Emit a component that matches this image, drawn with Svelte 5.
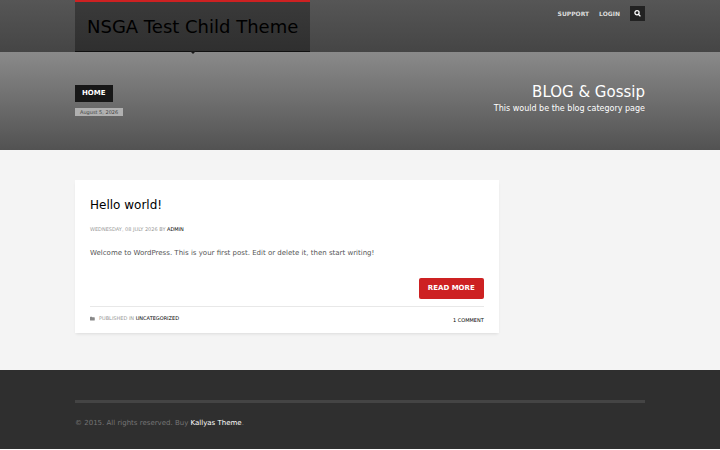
<script>
  const siteTitle = "NSGA Test Child Theme";

  const topLinks = [
    { label: "Support", href: "#support" },
    { label: "Login", href: "#login" },
  ];

  const posts = [
    {
      title: "Hello world!",
      date: "Wednesday, 08 July 2026",
      author: "admin",
      excerpt:
        "Welcome to WordPress. This is your first post. Edit or delete it, then start writing!",
      category: "Uncategorized",
      comments: 1,
    },
  ];
</script>

<svelte:head>
  <title>{siteTitle}</title>
</svelte:head>

<header class="site-header">
  <div class="container header-row">
    <a class="logo" href="#home">{siteTitle}</a>
    <nav class="top-nav">
      {#each topLinks as link}
        <a href={link.href}>{link.label}</a>
      {/each}
      <button class="search" aria-label="Search">
        <svg viewBox="0 0 14 14" aria-hidden="true">
          <circle cx="6" cy="5.5" r="4.2" />
          <path d="M8.8 8.4 L12.8 12.8" />
        </svg>
      </button>
    </nav>
  </div>
</header>

<section class="sub-header">
  <div class="container sub-row">
    <div class="crumbs">
      <a class="home" href="#home">Home</a>
      <span class="today">August 5, 2026</span>
    </div>
    <div class="page-title">
      <h1>BLOG &amp; Gossip</h1>
      <p>This would be the blog category page</p>
    </div>
  </div>
</section>

<main>
  <div class="container content">
    <div class="posts">
      {#each posts as post}
        <article class="post">
          <h2><a href="#post">{post.title}</a></h2>
          <p class="meta">{post.date} by <a href="#author">{post.author}</a></p>
          <p class="excerpt">{post.excerpt}</p>
          <a class="read-more" href="#post">Read more</a>
          <div class="post-footer">
            <span class="category">
              <svg viewBox="0 0 10 9" aria-hidden="true">
                <path d="M0 2 Q0 1 1 1 H3.5 Q4.5 1 4.5 2 H8.5 Q9.5 2 9.5 3 V7.5 Q9.5 8.5 8.5 8.5 H1 Q0 8.5 0 7.5 Z" />
              </svg>
              <span>Published in <a href="#category">{post.category}</a></span>
            </span>
            <a class="comments" href="#comments">
              {post.comments} Comment{post.comments === 1 ? "" : "s"}
            </a>
          </div>
        </article>
      {/each}
    </div>
  </div>
</main>

<footer class="site-footer">
  <div class="container">
    <p class="copyright">
      © 2015. All rights reserved. Buy <a href="#kallyas">Kallyas Theme</a>.
    </p>
  </div>
</footer>

<style>
  :global(body) {
    background: #fff;
    color: #555;
    font-family: "DejaVu Sans", Verdana, sans-serif;
    font-size: 7px;
    line-height: 10px;
  }

  a {
    color: inherit;
    text-decoration: none;
  }

  h1,
  h2,
  p {
    margin: 0;
    font-weight: 400;
  }

  main {
    background: #f4f4f4;
  }

  .container {
    box-sizing: border-box;
    width: calc(100% - 30px);
    max-width: 570px;
    margin: 0 auto;
  }

  .site-header {
    background: linear-gradient(#565656, #454545);
  }

  .header-row {
    display: flex;
    justify-content: space-between;
    align-items: flex-start;
  }

  .logo {
    position: relative;
    padding: 0 12px;
    border-top: 2px solid #cd2122;
    border-bottom: 1px solid #111;
    background: linear-gradient(#3a3a3a, #2f2f2f);
    color: #000;
    font-size: 18px;
    line-height: 49px;
  }

  .logo::after {
    content: "";
    position: absolute;
    top: 100%;
    left: 50%;
    margin-left: -3px;
    border: 3px solid transparent;
    border-top-color: #1a1a1a;
    border-bottom: 0;
  }

  .top-nav {
    display: flex;
    align-items: center;
    gap: 10px;
    padding-top: 6px;
    color: #ddd;
    font-size: 6px;
    font-weight: 700;
    text-transform: uppercase;
  }

  .search {
    display: flex;
    align-items: center;
    justify-content: center;
    width: 15px;
    height: 15px;
    padding: 0;
    border: 0;
    background: #222;
  }

  .search svg {
    width: 7px;
    height: 7px;
    fill: none;
    stroke: #fff;
    stroke-width: 2.6;
  }

  .sub-header {
    background: linear-gradient(#8a8a8a, #525252);
  }

  .sub-row {
    display: flex;
    justify-content: space-between;
    padding: 33px 0 34px;
  }

  .crumbs {
    display: flex;
    flex-direction: column;
    align-items: flex-start;
    gap: 6px;
  }

  .home {
    padding: 0 7px;
    background: #171717;
    color: #fff;
    font-weight: 700;
    line-height: 17px;
    text-transform: uppercase;
  }

  .today {
    padding: 0 5px;
    background: #b0b0b0;
    color: #444;
    font-size: 5px;
    line-height: 8px;
  }

  .page-title {
    color: #fff;
    text-align: right;
  }

  .page-title h1 {
    font-size: 15px;
    line-height: 14px;
  }

  .page-title p {
    margin-top: 5px;
    font-size: 8px;
  }

  .content {
    display: grid;
    grid-template-columns: 3fr 1fr;
    gap: 5px;
    padding: 30px 0 37px;
  }

  .post {
    display: flex;
    flex-direction: column;
    padding: 15px 15px 8px;
    background: #fff;
    box-shadow: 0 2px 3px -1px rgba(0, 0, 0, 0.1);
  }

  .post h2 {
    color: #000;
    font-size: 12px;
    line-height: 20px;
  }

  .meta {
    margin-top: 9px;
    color: #999;
    font-size: 5px;
    text-transform: uppercase;
  }

  .meta a,
  .category a,
  .comments {
    color: #000;
  }

  .excerpt {
    margin-top: 14px;
  }

  .read-more {
    align-self: flex-end;
    margin-top: 20px;
    padding: 0 9px;
    border-radius: 2px;
    background: #cd2122;
    color: #fff;
    font-weight: 700;
    line-height: 21px;
    text-transform: uppercase;
  }

  .post-footer {
    display: flex;
    justify-content: space-between;
    align-items: flex-start;
    margin-top: 7px;
    padding-top: 6px;
    border-top: 1px solid #e8e8e8;
    color: #999;
    font-size: 5px;
    text-transform: uppercase;
  }

  .category {
    display: flex;
    align-items: center;
    gap: 4px;
  }

  .category svg {
    width: 5px;
    height: 5px;
    fill: #888;
  }

  .comments {
    padding-top: 2px;
  }

  .site-footer {
    padding: 30px 0 21px;
    background: #2f2f2f;
    color: #757575;
  }

  .copyright {
    padding-top: 15px;
    border-top: 3px solid #444;
  }

  .copyright a {
    color: #fff;
  }
</style>
